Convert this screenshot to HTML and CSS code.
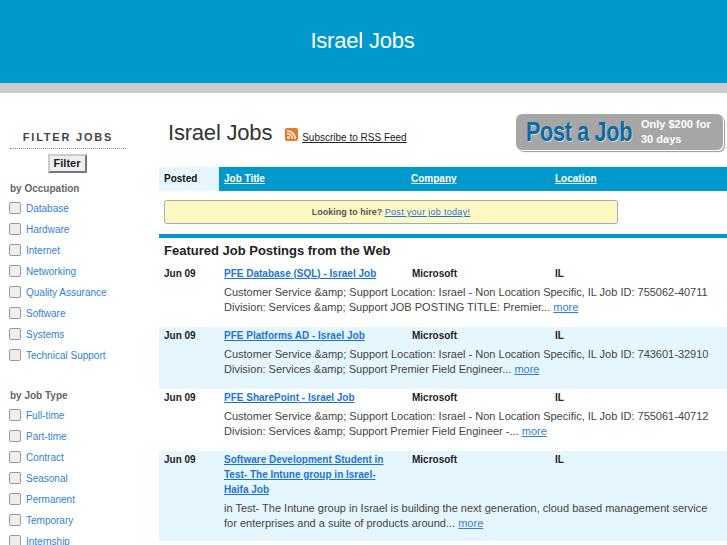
FILE: index.html
```html
<!DOCTYPE html>
<html lang="en">
<head>
    <meta charset="UTF-8">
    <meta name="viewport" content="width=device-width, initial-scale=1.0">
    <title>Israel Jobs</title>
    <link rel="stylesheet" href="styles.css">
</head>
<body>
    <header class="site-header">
        <div class="site-title">Israel Jobs</div>
    </header>
    <div class="page">
        <aside class="sidebar">
            <h3 class="filter-title">FILTER JOBS</h3>
            <div class="filter-btn-wrap"><button class="filter-btn">Filter</button></div>
            <h4 class="filter-group">by Occupation</h4>
            <ul class="filter-list">
                <li><span class="check"></span><a href="#">Database</a></li>
                <li><span class="check"></span><a href="#">Hardware</a></li>
                <li><span class="check"></span><a href="#">Internet</a></li>
                <li><span class="check"></span><a href="#">Networking</a></li>
                <li><span class="check"></span><a href="#">Quality Assurance</a></li>
                <li><span class="check"></span><a href="#">Software</a></li>
                <li><span class="check"></span><a href="#">Systems</a></li>
                <li><span class="check"></span><a href="#">Technical Support</a></li>
            </ul>
            <h4 class="filter-group group-two">by Job Type</h4>
            <ul class="filter-list">
                <li><span class="check"></span><a href="#">Full-time</a></li>
                <li><span class="check"></span><a href="#">Part-time</a></li>
                <li><span class="check"></span><a href="#">Contract</a></li>
                <li><span class="check"></span><a href="#">Seasonal</a></li>
                <li><span class="check"></span><a href="#">Permanent</a></li>
                <li><span class="check"></span><a href="#">Temporary</a></li>
                <li><span class="check"></span><a href="#">Internship</a></li>
            </ul>
        </aside>
        <main class="content">
            <div class="title-bar">
                <h1 class="page-title">Israel Jobs</h1>
                <svg class="rss" width="13" height="13" viewBox="0 0 13 13">
                    <rect width="13" height="13" rx="2" fill="#e8792b"/>
                    <circle cx="3.4" cy="9.6" r="1.4" fill="#fff"/>
                    <path d="M2 5.6a5.4 5.4 0 0 1 5.4 5.4M2 2.8a8.2 8.2 0 0 1 8.2 8.2" fill="none" stroke="#fff" stroke-width="1.5"/>
                </svg>
                <a class="rss-link" href="#">Subscribe to RSS Feed</a>
                <a class="post-job" href="#">
                    <span class="post-big">Post a Job</span>
                    <span class="post-small">Only $200 for 30 days</span>
                </a>
            </div>
            <div class="job-head">
                <div class="head-posted">Posted</div>
                <a href="#">Job Title</a>
                <a href="#">Company</a>
                <a href="#">Location</a>
            </div>
            <div class="hire-box">Looking to hire? <a href="#">Post your job today!</a></div>
            <h2 class="featured">Featured Job Postings from the Web</h2>

            <div class="job">
                <div class="job-date">Jun 09</div>
                <a class="job-title" href="#">PFE Database (SQL) - Israel Job</a>
                <div class="job-co">Microsoft</div>
                <div class="job-loc">IL</div>
                <p class="job-desc">Customer Service &amp;amp; Support Location: Israel - Non Location Specific, IL Job ID: 755062-40711 Division: Services &amp;amp; Support JOB POSTING TITLE: Premier... <a href="#">more</a></p>
            </div>
            <div class="job alt">
                <div class="job-date">Jun 09</div>
                <a class="job-title" href="#">PFE Platforms AD - Israel Job</a>
                <div class="job-co">Microsoft</div>
                <div class="job-loc">IL</div>
                <p class="job-desc">Customer Service &amp;amp; Support Location: Israel - Non Location Specific, IL Job ID: 743601-32910 Division: Services &amp;amp; Support Premier Field Engineer... <a href="#">more</a></p>
            </div>
            <div class="job">
                <div class="job-date">Jun 09</div>
                <a class="job-title" href="#">PFE SharePoint - Israel Job</a>
                <div class="job-co">Microsoft</div>
                <div class="job-loc">IL</div>
                <p class="job-desc">Customer Service &amp;amp; Support Location: Israel - Non Location Specific, IL Job ID: 755061-40712 Division: Services &amp;amp; Support Premier Field Engineer -... <a href="#">more</a></p>
            </div>
            <div class="job alt">
                <div class="job-date">Jun 09</div>
                <a class="job-title" href="#">Software Development Student in Test- The Intune group in Israel- Haifa Job</a>
                <div class="job-co">Microsoft</div>
                <div class="job-loc">IL</div>
                <p class="job-desc">in Test- The Intune group in Israel is building the next generation, cloud based management service for enterprises and a suite of products around... <a href="#">more</a></p>
            </div>
        </main>
    </div>
</body>
</html>
```

FILE: styles.css
```css
html, body {
    height: 545px;
    overflow: hidden;
}

body {
    margin: 0;
    font-family: "Liberation Sans", Arial, sans-serif;
    background-color: #fff;
    color: #333;
}

a {
    color: #1a73d9;
}

.site-header {
    height: 83px;
    background-color: #0099cc;
    border-bottom: 10px solid #cccccc;
    text-align: center;
}

.site-title {
    padding: 28px 2px 0 0;
    font-size: 22px;
    line-height: 26px;
    letter-spacing: -0.2px;
    color: #fff;
}

.page {
    display: flex;
}

/* sidebar */
.sidebar {
    width: 116px;
    margin-left: 10px;
    padding-top: 37px;
    margin-right: 33px;
    flex-shrink: 0;
}

.filter-title {
    margin: 0;
    padding-bottom: 4px;
    border-bottom: 1px dotted #888;
    font-size: 11px;
    line-height: 14px;
    letter-spacing: 1.8px;
    text-align: center;
    color: #444;
}

.filter-btn-wrap {
    margin-top: 4px;
    padding-right: 2px;
    text-align: center;
}

.filter-btn {
    padding: 0;
    width: 39px;
    height: 19px;
    font-family: inherit;
    font-size: 11px;
    font-weight: bold;
    color: #222;
    background: #eee;
    border: 2px solid #888;
    border-color: #ccc #777 #777 #ccc;
}

.filter-group {
    margin: 9px 0 2px;
    font-size: 10px;
    line-height: 14px;
    color: #666;
}

.group-two {
    margin-top: 23px;
}

.filter-list {
    list-style: none;
    margin: 0;
    padding: 0;
}

.filter-list li {
    display: flex;
    align-items: center;
    height: 21px;
    font-size: 10px;
}

.filter-list a {
    text-decoration: none;
    color: #2f7fd8;
}

.check {
    width: 10px;
    height: 10px;
    margin-left: -1px;
    margin-right: 5px;
    border: 1px solid #999;
    border-radius: 2px;
    background: #eee;
}

/* main column */
.content {
    flex: 1;
    min-width: 0;
}

.title-bar {
    display: flex;
    align-items: center;
    height: 74px;
    padding: 0 4px 0 9px;
}

.page-title {
    margin: 6px 13px 0 0;
    font-size: 22px;
    font-weight: normal;
    letter-spacing: -0.2px;
    color: #333;
}

.rss {
    margin-right: 4px;
    margin-top: 8px;
}

.rss-link {
    margin-top: 14px;
    font-size: 10px;
    color: #222;
}

.post-job {
    display: flex;
    align-items: center;
    gap: 8px;
    box-sizing: border-box;
    width: 207px;
    height: 36px;
    margin-top: 4px;
    margin-left: auto;
    padding-left: 10px;
    background: #a6a6a6;
    border-radius: 6px;
    box-shadow: 1px 1px 0 #fff, 2px 2px 1px #999;
    text-decoration: none;
}

.post-big {
    width: 107px;
    font-size: 27px;
    font-weight: bold;
    letter-spacing: -0.4px;
    white-space: nowrap;
    color: #0b6aa3;
    text-shadow: 1px 1px 0 #d8d8d8;
    transform: scaleX(0.8);
    transform-origin: left;
}

.post-small {
    width: 76px;
    font-size: 11px;
    font-weight: bold;
    line-height: 15px;
    color: #fff;
}

.job-head {
    display: grid;
    grid-template-columns: 60px 192px 144px 1fr;
    height: 24px;
    line-height: 24px;
    background-color: #0099cc;
    font-size: 10px;
    font-weight: bold;
}

.job-head a {
    color: #fff;
    padding-left: 5px;
}

.job-head a:nth-child(3),
.job-head a:nth-child(4) {
    padding-left: 0;
}

.head-posted {
    padding-left: 5px;
    background-color: #e6f6fe;
    color: #111;
}

.hire-box {
    box-sizing: border-box;
    width: 454px;
    height: 24px;
    margin: 9px 0 10px 5px;
    line-height: 22px;
    text-align: center;
    font-size: 9px;
    font-weight: bold;
    color: #555;
    background-color: #fff8c4;
    border: 1px solid #aaa;
    border-radius: 3px;
}

.hire-box a {
    font-weight: normal;
    letter-spacing: 0.3px;
}

.featured {
    margin: 0;
    padding: 4px 5px 6px;
    border-top: 4px solid #0099cc;
    font-size: 13px;
    line-height: 17px;
    color: #222;
}

.job {
    display: grid;
    grid-template-columns: 60px 188px 143px 1fr;
    align-content: start;
    box-sizing: border-box;
    min-height: 62px;
    padding: 1px 5px 10px;
    font-size: 10px;
    line-height: 15px;
}

.job.alt {
    background-color: #e6f6fe;
}

.job-date,
.job-co,
.job-loc {
    font-weight: bold;
    color: #222;
}

.job-title {
    padding-right: 14px;
    font-weight: bold;
}

.job-desc {
    grid-column: 2 / 5;
    margin: 4px 0 0;
    font-size: 11px;
    line-height: 15px;
    color: #444;
}

.job-desc a {
    color: #2f7fd8;
}
```
